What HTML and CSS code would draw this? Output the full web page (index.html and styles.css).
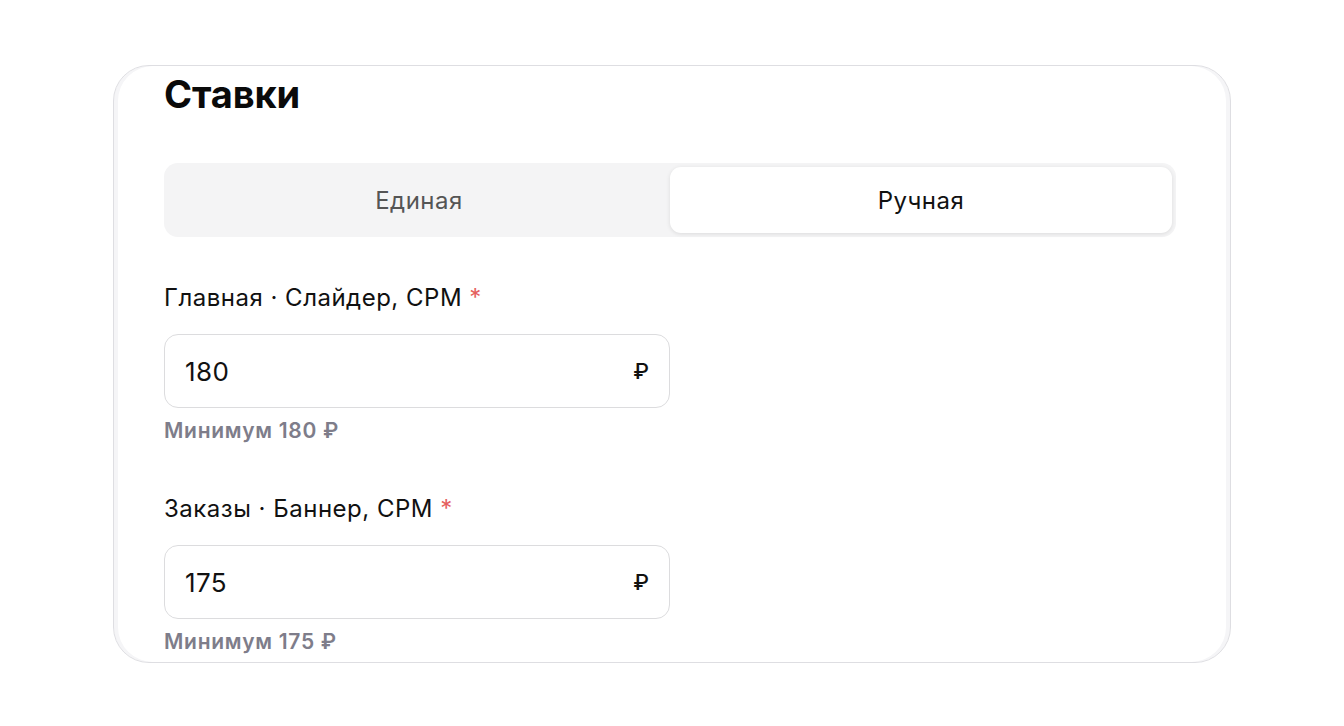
FILE: index.html
```html
<!DOCTYPE html>
<html lang="ru">
<head>
    <meta charset="UTF-8">
    <meta name="viewport" content="width=device-width, initial-scale=1.0">
    <title>Ставки</title>
    <link rel="stylesheet" href="styles.css">
</head>
<body>
    <div class="card">
        <h2 class="card-title">Ставки</h2>

        <div class="segmented">
            <button class="segment">Единая</button>
            <button class="segment active">Ручная</button>
        </div>

        <div class="field">
            <label for="bidMain">Главная · Слайдер, СРМ <span class="req">*</span></label>
            <div class="input-wrap">
                <input type="text" id="bidMain" value="180">
                <span class="currency">₽</span>
            </div>
            <div class="hint">Минимум 180 ₽</div>
        </div>

        <div class="field">
            <label for="bidOrders">Заказы · Баннер, СРМ <span class="req">*</span></label>
            <div class="input-wrap">
                <input type="text" id="bidOrders" value="175">
                <span class="currency">₽</span>
            </div>
            <div class="hint">Минимум 175 ₽</div>
        </div>
    </div>
</body>
</html>
```

FILE: styles.css
```css
body {
    margin: 0;
    padding: 65px 0 0 113px;
    background-color: #fff;
    font-family: Inter, "Noto Sans", sans-serif;
    color: #111;
}
.card {
    box-sizing: border-box;
    width: 1118px;
    height: 598px;
    padding: 6px 54px 0 50px;
    border: 1.5px solid #dedee2;
    border-radius: 36px;
    overflow: hidden;
    background-color: #fff;
    box-shadow: inset 4px 0 0 #f5f5f7, inset -4px 0 0 #f5f5f7;
}
.card-title {
    margin: 0 0 47px;
    font-size: 38px;
    line-height: 44px;
    font-weight: 700;
    letter-spacing: -0.1px;
    color: #0a0a0a;
}
.segmented {
    display: flex;
    padding: 4px;
    height: 74px;
    box-sizing: border-box;
    background-color: #f4f4f5;
    border-radius: 14px;
    margin-bottom: 46px;
}
.segment {
    flex: 1;
    border: none;
    background: none;
    font-family: inherit;
    font-size: 24px;
    letter-spacing: 0.5px;
    color: #555;
    border-radius: 11px;
    cursor: pointer;
}
.segment.active {
    background-color: #fff;
    color: #111;
    box-shadow: 0 1px 4px rgba(0, 0, 0, 0.10);
}
.field {
    width: 506px;
    margin-bottom: 50px;
}
label {
    display: block;
    font-size: 24px;
    line-height: 30px;
    letter-spacing: 0.5px;
    margin-bottom: 21px;
}
.req {
    color: #e5605e;
}
.input-wrap {
    display: flex;
    align-items: center;
    height: 74px;
    box-sizing: border-box;
    padding: 0 20px;
    border: 1.5px solid #dcdcde;
    border-radius: 14px;
}
.input-wrap input {
    flex: 1;
    border: none;
    outline: none;
    padding: 0;
    font-family: inherit;
    font-size: 26px;
    letter-spacing: 0.4px;
    color: #111;
    background: none;
}
.currency {
    font-size: 22px;
    font-weight: 500;
}
.hint {
    margin-top: 10px;
    font-size: 21px;
    line-height: 26px;
    letter-spacing: 0.7px;
    font-weight: 600;
    color: #7e7d8a;
}
```
